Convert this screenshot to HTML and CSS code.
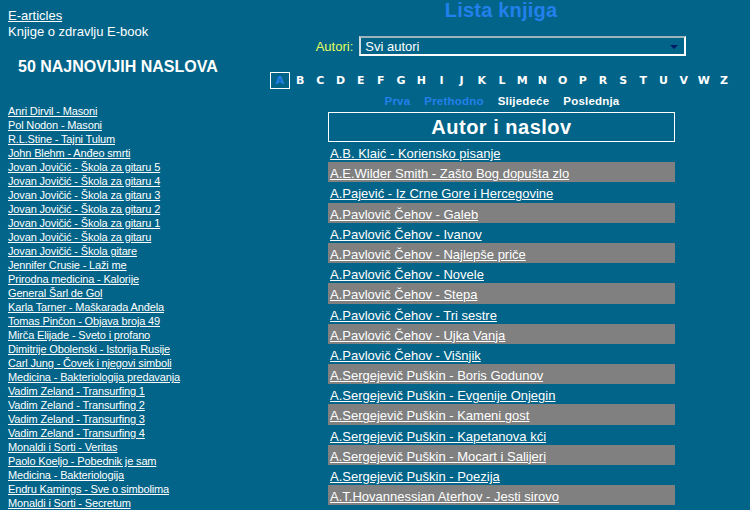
FILE: index.html
```html
<!DOCTYPE html>
<html>
<head>
<meta charset="utf-8">
<link rel="stylesheet" href="styles.css">
</head>
<body>
<div class="page">
  <aside class="side">
    <a class="top-link" href="#">E-articles</a>
    <div class="sub">Knjige o zdravlju E-book</div>
    <h2 class="latest">50 NAJNOVIJIH NASLOVA</h2>
    <ul class="recent">
      <li><a href="#">Anri Dirvil - Masoni</a></li>
      <li><a href="#">Pol Nodon - Masoni</a></li>
      <li><a href="#">R.L.Stine - Tajni Tulum</a></li>
      <li><a href="#">John Blehm - Anđeo smrti</a></li>
      <li><a href="#">Jovan Jovičić - Škola za gitaru 5</a></li>
      <li><a href="#">Jovan Jovičić - Škola za gitaru 4</a></li>
      <li><a href="#">Jovan Jovičić - Škola za gitaru 3</a></li>
      <li><a href="#">Jovan Jovičić - Škola za gitaru 2</a></li>
      <li><a href="#">Jovan Jovičić - Škola za gitaru 1</a></li>
      <li><a href="#">Jovan Jovičić - Škola za gitaru</a></li>
      <li><a href="#">Jovan Jovičić - Škola gitare</a></li>
      <li><a href="#">Jennifer Crusie - Laži me</a></li>
      <li><a href="#">Prirodna medicina - Kalorije</a></li>
      <li><a href="#">General Šarl de Gol</a></li>
      <li><a href="#">Karla Tarner - Maškarada Anđela</a></li>
      <li><a href="#">Tomas Pinčon - Objava broja 49</a></li>
      <li><a href="#">Mirča Elijade - Sveto i profano</a></li>
      <li><a href="#">Dimitrije Obolenski - Istorija Rusije</a></li>
      <li><a href="#">Carl Jung - Čovek i njegovi simboli</a></li>
      <li><a href="#">Medicina - Bakteriologija predavanja</a></li>
      <li><a href="#">Vadim Zeland - Transurfing 1</a></li>
      <li><a href="#">Vadim Zeland - Transurfing 2</a></li>
      <li><a href="#">Vadim Zeland - Transurfing 3</a></li>
      <li><a href="#">Vadim Zeland - Transurfing 4</a></li>
      <li><a href="#">Monaldi i Sorti - Veritas</a></li>
      <li><a href="#">Paolo Koeljo - Pobednik je sam</a></li>
      <li><a href="#">Medicina - Bakteriologija</a></li>
      <li><a href="#">Endru Kamings - Sve o simbolima</a></li>
      <li><a href="#">Monaldi i Sorti - Secretum</a></li>
    </ul>
  </aside>
  <main class="main">
    <h1 class="title">Lista knjiga</h1>
    <div class="filter">
      <span class="filter-label">Autori:</span>
      <div class="select"><span>Svi autori</span><span class="arrow"></span></div>
    </div>
    <nav class="letters">
      <a class="active" href="#">A</a><a href="#">B</a><a href="#">C</a><a href="#">D</a><a href="#">E</a><a href="#">F</a><a href="#">G</a><a href="#">H</a><a href="#">I</a><a href="#">J</a><a href="#">K</a><a href="#">L</a><a href="#">M</a><a href="#">N</a><a href="#">O</a><a href="#">P</a><a href="#">R</a><a href="#">S</a><a href="#">T</a><a href="#">U</a><a href="#">V</a><a href="#">W</a><a href="#">Z</a>
    </nav>
    <nav class="pager">
      <span class="off">Prva</span>
      <span class="off">Prethodno</span>
      <a href="#">Slijedeće</a>
      <a href="#">Poslednja</a>
    </nav>
    <div class="books">
      <div class="books-head">Autor i naslov</div>
      <a class="book" href="#">A.B. Klaić - Koriensko pisanje</a>
      <a class="book alt" href="#">A.E.Wilder Smith - Zašto Bog dopušta zlo</a>
      <a class="book" href="#">A.Pajević - Iz Crne Gore i Hercegovine</a>
      <a class="book alt" href="#">A.Pavlovič Čehov - Galeb</a>
      <a class="book" href="#">A.Pavlovič Čehov - Ivanov</a>
      <a class="book alt" href="#">A.Pavlovič Čehov - Najlepše priče</a>
      <a class="book" href="#">A.Pavlovič Čehov - Novele</a>
      <a class="book alt" href="#">A.Pavlovič Čehov - Stepa</a>
      <a class="book" href="#">A.Pavlovič Čehov - Tri sestre</a>
      <a class="book alt" href="#">A.Pavlovič Čehov - Ujka Vanja</a>
      <a class="book" href="#">A.Pavlovič Čehov - Višnjik</a>
      <a class="book alt" href="#">A.Sergejevič Puškin - Boris Godunov</a>
      <a class="book" href="#">A.Sergejevič Puškin - Evgenije Onjegin</a>
      <a class="book alt" href="#">A.Sergejevič Puškin - Kameni gost</a>
      <a class="book" href="#">A.Sergejevič Puškin - Kapetanova kći</a>
      <a class="book alt" href="#">A.Sergejevič Puškin - Mocart i Salijeri</a>
      <a class="book" href="#">A.Sergejevič Puškin - Poezija</a>
      <a class="book alt" href="#">A.T.Hovannessian Aterhov - Jesti sirovo</a>
      <a class="book" href="#">A.T.Sonnenberg - Ishrana</a>
    </div>
  </main>
</div>
</body>
</html>
```

FILE: styles.css
```css
html, body {
  margin: 0;
  padding: 0;
  background: #026488;
  color: #ffffff;
  font-family: "Liberation Sans", Arial, sans-serif;
  font-size: 12px;
  overflow: hidden;
}
a { color: #ffffff; }
.page {
  display: grid;
  grid-template-columns: 250px 500px;
  height: 510px;
  overflow: hidden;
}
.side {
  padding: 8px 0 0 8px;
  font-size: 13px;
  line-height: 16px;
}
.top-link { display: inline-block; }
.latest {
  margin: 18px 0 0 10px;
  font-size: 16px;
  line-height: 18px;
  font-weight: bold;
}
.recent {
  list-style: none;
  margin: 28px 0 0 0;
  padding: 0;
  font-size: 11px;
  line-height: 14px;
  letter-spacing: -0.15px;
}
.main {
  display: flex;
  flex-direction: column;
  align-items: center;
}
.title {
  margin: 0;
  font-size: 20px;
  line-height: 20px;
  color: #2280ec;
  font-weight: bold;
  padding-left: 2px;
  letter-spacing: 0.2px;
}
.filter {
  display: flex;
  align-items: center;
  gap: 6px;
  margin-top: 16px;
  margin-left: 2px;
}
.filter-label { color: #e4ff60; font-size: 13px; }
.select {
  width: 327px;
  height: 20px;
  box-sizing: border-box;
  border: 2px solid #ffffff;
  border-top-color: #9fb3bd;
  border-left-color: #cfdde3;
  display: flex;
  align-items: center;
  justify-content: space-between;
  padding: 0 6px 0 4px;
  font-size: 13px;
}
.arrow {
  width: 0; height: 0;
  border-left: 4px solid transparent;
  border-right: 4px solid transparent;
  border-top: 4px solid #001a66;
  margin-top: 2px;
}
.letters {
  display: flex;
  margin-top: 16px;
  margin-left: 4px;
  font-family: "DejaVu Sans", Verdana, sans-serif;
  font-weight: bold;
  font-size: 11px;
}
.letters a {
  box-sizing: border-box;
  width: 20.2px;
  text-align: center;
  text-decoration: none;
  line-height: 15px;
  border: 1px solid transparent;
}
.letters a.active {
  color: #2280ec;
  border-color: #ffffff;
}
.pager {
  display: flex;
  gap: 14px;
  margin-top: 4px;
  font-family: "Liberation Sans", Arial, sans-serif;
  font-weight: bold;
  font-size: 11.5px;
  line-height: 16px;
  margin-left: 4px;
  letter-spacing: 0.2px;
}
.pager a { text-decoration: none; }
.pager .off { color: #2280ec; }
.books {
  width: 347px;
  margin-top: 3px;
  margin-left: 3px;
  display: flex;
  flex-direction: column;
}
.books-head {
  border: 1px solid #ffffff;
  height: 28px;
  line-height: 29px;
  text-align: center;
  font-weight: bold;
  font-size: 20px;
  letter-spacing: 0.5px;
}
.book {
  display: block;
  box-sizing: border-box;
  height: 20.2px;
  padding-top: 3px;
  line-height: 17px;
  padding-left: 2px;
  font-size: 13px;
}
.book.alt { background: #808080; }
```
